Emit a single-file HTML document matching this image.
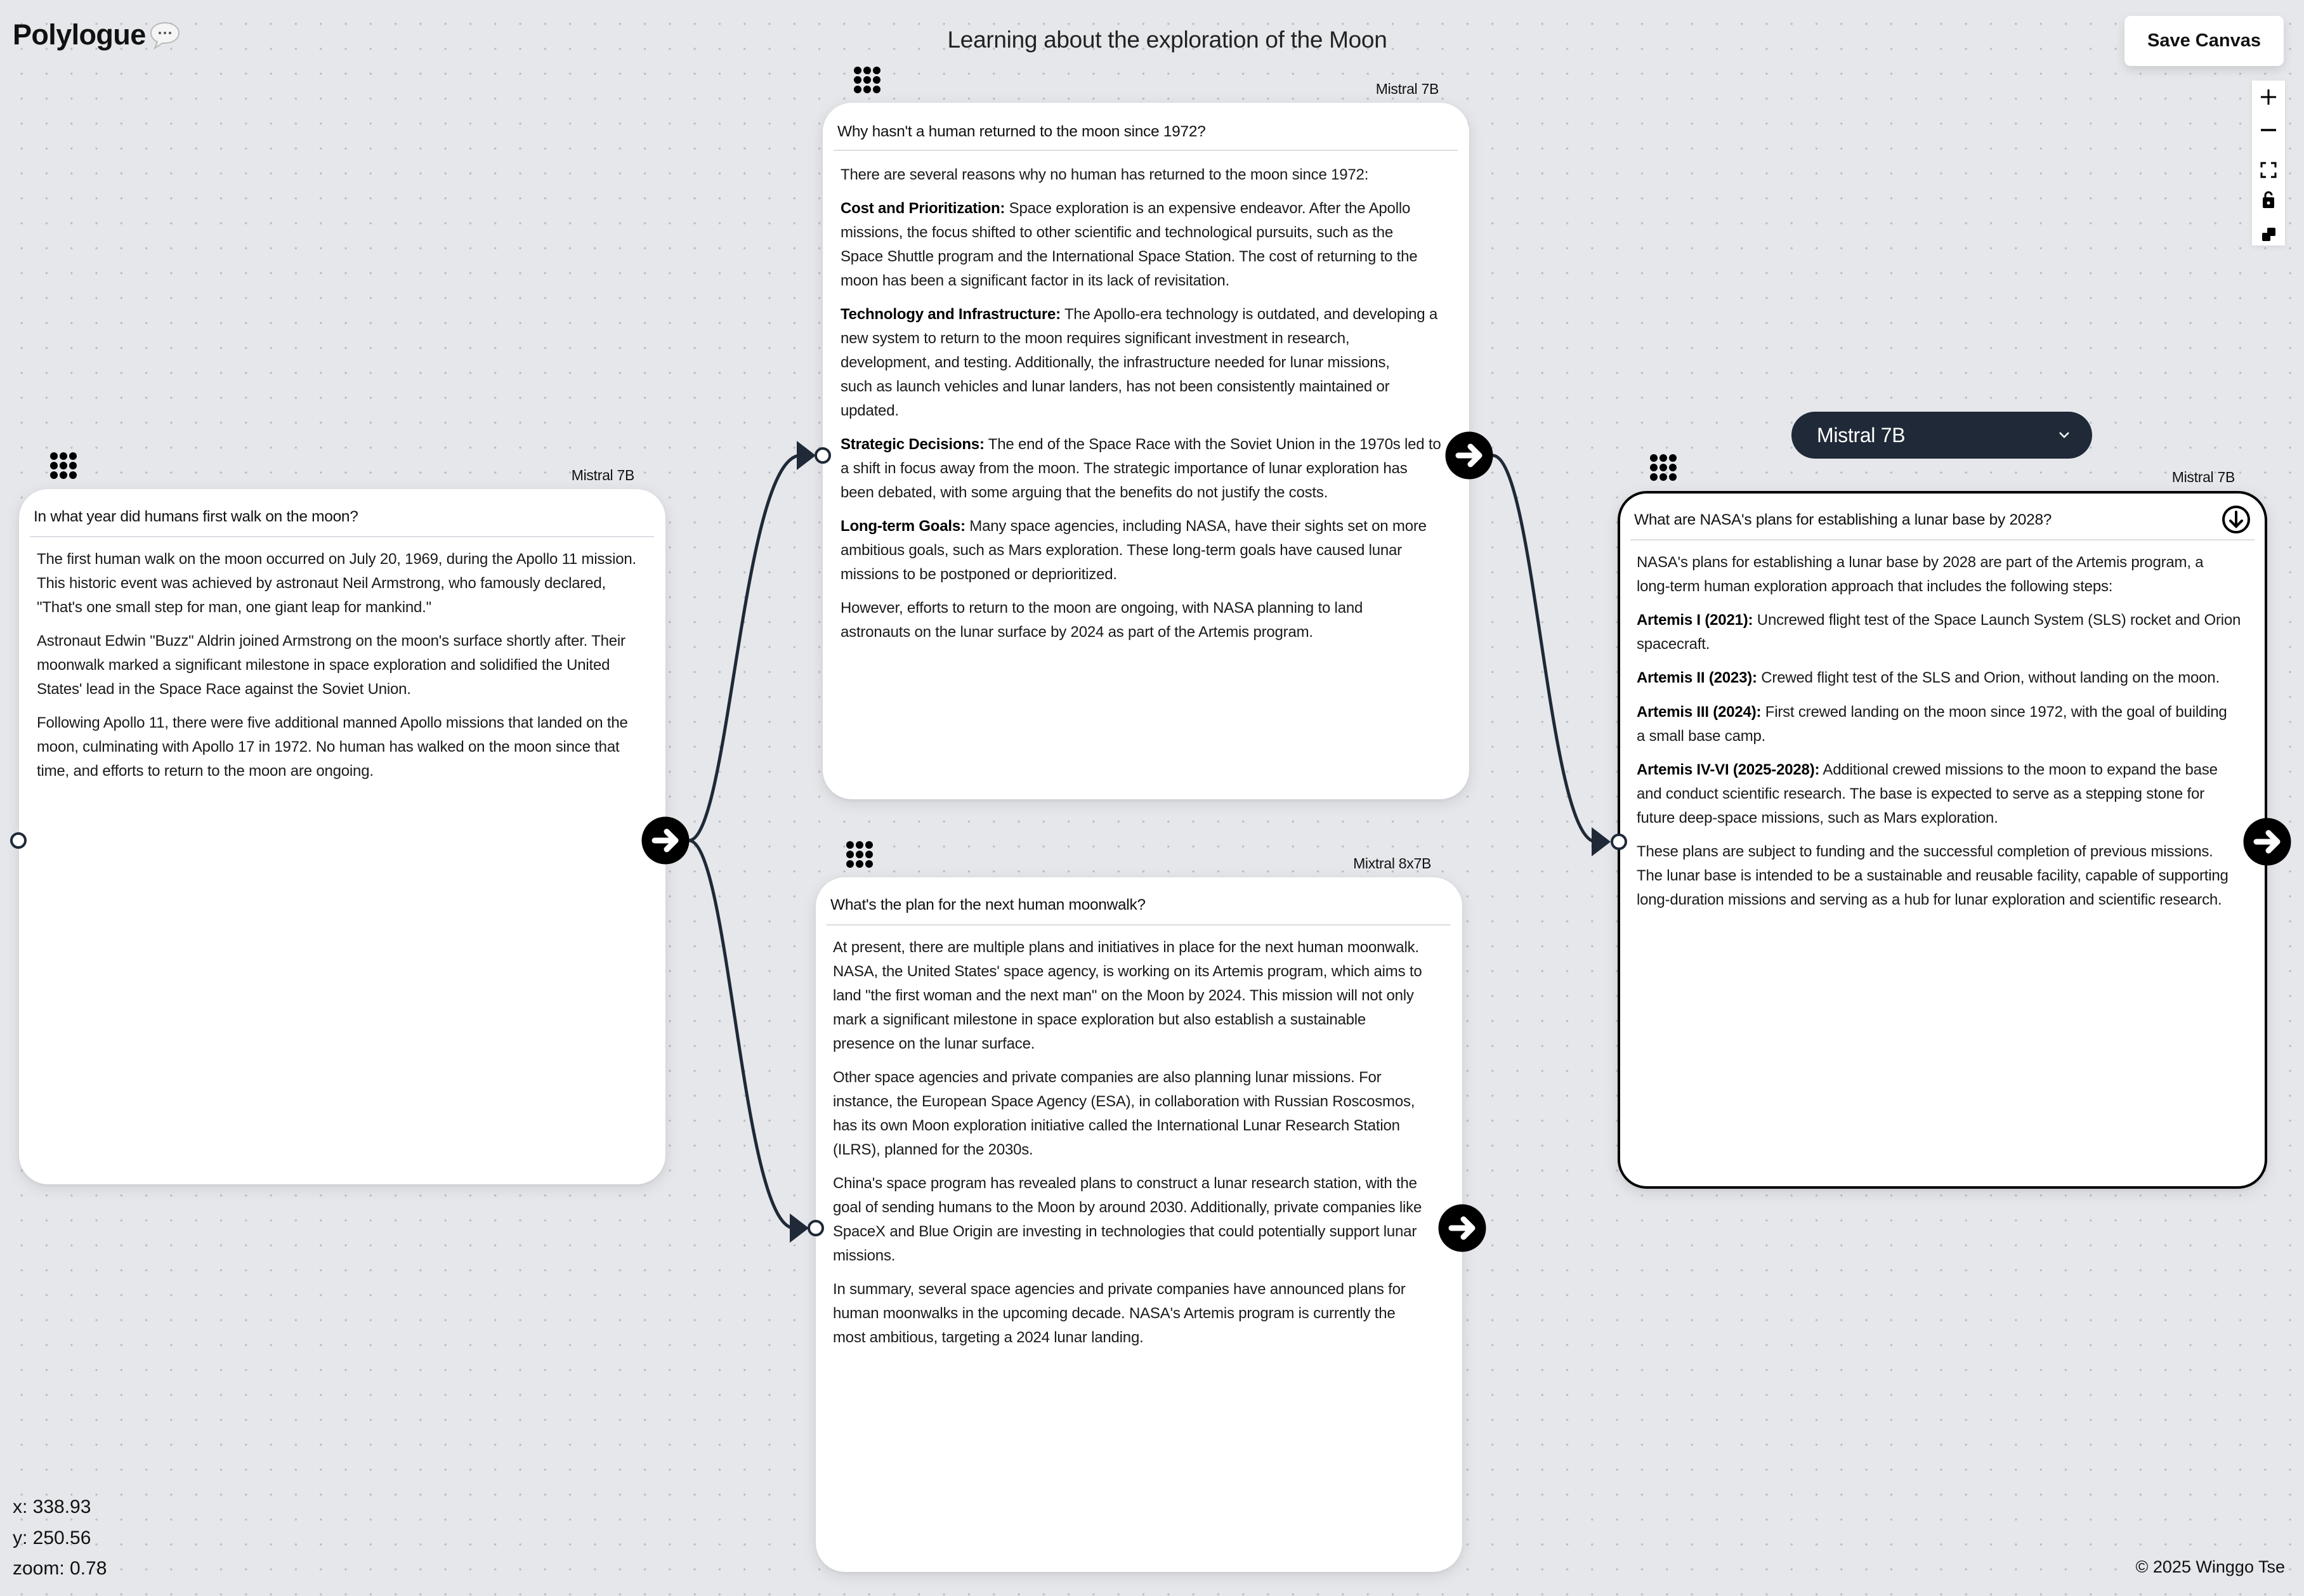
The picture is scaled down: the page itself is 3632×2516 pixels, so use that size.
<!DOCTYPE html>
<html><head><meta charset="utf-8">
<style>
*{box-sizing:border-box;margin:0;padding:0}
html,body{width:3632px;height:2516px;overflow:hidden}
body{background-color:#e5e7eb;background-image:radial-gradient(circle,#b9bcc2 1.4px,transparent 2px);background-size:39.3px 39.3px;background-position:14.5px 18px;font-family:"Liberation Sans",sans-serif;color:#111;position:relative}
.abs{position:absolute}
.card{position:absolute;background:#fff;border-radius:46px;box-shadow:0 6px 24px rgba(0,0,0,0.10),0 2px 6px rgba(0,0,0,0.05)}
.q{position:absolute;font-size:24.5px;white-space:nowrap;letter-spacing:-0.3px;line-height:30px}
.sep{position:absolute;height:2px;background:#dcdde2}
.body{position:absolute;font-size:24px;letter-spacing:-0.2px;line-height:37.9px;white-space:nowrap;color:#1a1a1a}
.body p{margin-bottom:15.4px}
.body b{font-weight:700;color:#000}
.lbl{position:absolute;font-size:23px;white-space:nowrap;letter-spacing:-0.3px;text-align:right}
.drag{position:absolute;width:42px;height:42px;display:grid;grid-template-columns:repeat(3,12px);gap:3px}
.drag i{width:12px;height:12px;border-radius:50%;background:#000;display:block}
</style></head><body>

<div class="abs" style="left:20px;top:29px;font-size:45px;font-weight:700;letter-spacing:-0.6px">Polylogue</div>
<svg class="abs" style="left:234px;top:32px" width="52" height="50" viewBox="0 0 52 50"><path d="M26 4C13 4 4 11 4 20c0 6 4 11 10 14l-4 10 12-8c1 0 3 0 4 0 13 0 22-7 22-16S39 4 26 4z" fill="#f5f5f5" stroke="#b9b9b9" stroke-width="2"/><circle cx="18" cy="20" r="2" fill="#555"/><circle cx="26" cy="20" r="2" fill="#555"/><circle cx="34" cy="20" r="2" fill="#555"/></svg>

<div class="abs" style="left:1340px;top:42px;width:1000px;text-align:center;font-size:37px;color:#222;letter-spacing:-0.3px">Learning about the exploration of the Moon</div>

<div class="abs" style="left:3349px;top:25px;width:251px;height:79px;background:#fff;border-radius:10px;box-shadow:0 6px 16px rgba(0,0,0,0.12);font-size:29px;font-weight:700;text-align:center;line-height:79px;color:#111">Save Canvas</div>

<div class="abs" style="left:3550px;top:127px;width:52px;height:260px;background:#fff;box-shadow:0 2px 8px rgba(0,0,0,0.08)">
<svg width="52" height="260" viewBox="0 0 52 260">
<path d="M26 14v24M14 26h24" stroke="#000" stroke-width="3"/>
<path d="M14 78h24" stroke="#000" stroke-width="3.5"/>
<path d="M15 137v-7h7M30 130h7v7M37 145v7h-7M22 152h-7v-7" stroke="#000" stroke-width="3" fill="none"/>
<rect x="17" y="184" width="18" height="17" rx="2" fill="#000"/><path d="M21 185v-4a5 5 0 0 1 10 0" stroke="#000" stroke-width="3" fill="none"/><circle cx="26" cy="193" r="2.5" fill="#fff"/>
<rect x="16" y="240" width="13" height="13" rx="2" fill="#000"/><rect x="24" y="232" width="13" height="13" rx="2" fill="#000"/>
</svg></div>

<svg class="abs" style="left:0;top:0" width="3632" height="2516">
<g stroke="#1f2937" stroke-width="5" fill="none">
<path d="M1086 1325C1150 1325 1170 718 1262 718"/>
<path d="M1086 1325C1150 1325 1170 1936 1252 1936"/>
<path d="M2353 718C2420 718 2440 1327 2516 1327"/>
</g>
<g fill="#1f2937">
<path d="M1256 695L1286 718L1256 741Z"/>
<path d="M1245 1913L1275 1936L1245 1959Z"/>
<path d="M2509 1304L2539 1327L2509 1350Z"/>
</g>
</svg>

<!-- Node 1 -->
<div class="drag" style="left:79px;top:713px"><i></i><i></i><i></i><i></i><i></i><i></i><i></i><i></i><i></i></div>
<div class="lbl" style="right:2632px;top:736px">Mistral 7B</div>
<div class="card" style="left:30px;top:771px;width:1019px;height:1096px"></div>
<div class="q" style="left:53px;top:800px">In what year did humans first walk on the moon?</div>
<div class="sep" style="left:47px;top:845px;width:984px"></div>
<div class="body" style="left:58px;top:863px">
<p>The first human walk on the moon occurred on July 20, 1969, during the Apollo 11 mission.<br>This historic event was achieved by astronaut Neil Armstrong, who famously declared,<br>"That's one small step for man, one giant leap for mankind."</p>
<p>Astronaut Edwin "Buzz" Aldrin joined Armstrong on the moon's surface shortly after. Their<br>moonwalk marked a significant milestone in space exploration and solidified the United<br>States' lead in the Space Race against the Soviet Union.</p>
<p>Following Apollo 11, there were five additional manned Apollo missions that landed on the<br>moon, culminating with Apollo 17 in 1972. No human has walked on the moon since that<br>time, and efforts to return to the moon are ongoing.</p>
</div>

<!-- Node 2 -->
<div class="drag" style="left:1346px;top:105px"><i></i><i></i><i></i><i></i><i></i><i></i><i></i><i></i><i></i></div>
<div class="lbl" style="right:1364px;top:127px">Mistral 7B</div>
<div class="card" style="left:1297px;top:162px;width:1019px;height:1098px"></div>
<div class="q" style="left:1320px;top:193px">Why hasn't a human returned to the moon since 1972?</div>
<div class="sep" style="left:1314px;top:236px;width:984px"></div>
<div class="body" style="left:1325px;top:257px">
<p>There are several reasons why no human has returned to the moon since 1972:</p>
<p><b>Cost and Prioritization:</b> Space exploration is an expensive endeavor. After the Apollo<br>missions, the focus shifted to other scientific and technological pursuits, such as the<br>Space Shuttle program and the International Space Station. The cost of returning to the<br>moon has been a significant factor in its lack of revisitation.</p>
<p><b>Technology and Infrastructure:</b> The Apollo-era technology is outdated, and developing a<br>new system to return to the moon requires significant investment in research,<br>development, and testing. Additionally, the infrastructure needed for lunar missions,<br>such as launch vehicles and lunar landers, has not been consistently maintained or<br>updated.</p>
<p><b>Strategic Decisions:</b> The end of the Space Race with the Soviet Union in the 1970s led to<br>a shift in focus away from the moon. The strategic importance of lunar exploration has<br>been debated, with some arguing that the benefits do not justify the costs.</p>
<p><b>Long-term Goals:</b> Many space agencies, including NASA, have their sights set on more<br>ambitious goals, such as Mars exploration. These long-term goals have caused lunar<br>missions to be postponed or deprioritized.</p>
<p>However, efforts to return to the moon are ongoing, with NASA planning to land<br>astronauts on the lunar surface by 2024 as part of the Artemis program.</p>
</div>

<!-- Node 3 -->
<div class="drag" style="left:1334px;top:1326px"><i></i><i></i><i></i><i></i><i></i><i></i><i></i><i></i><i></i></div>
<div class="lbl" style="right:1376px;top:1348px">Mixtral 8x7B</div>
<div class="card" style="left:1286px;top:1383px;width:1019px;height:1095px"></div>
<div class="q" style="left:1309px;top:1412px">What's the plan for the next human moonwalk?</div>
<div class="sep" style="left:1303px;top:1457px;width:984px"></div>
<div class="body" style="left:1313px;top:1475px">
<p>At present, there are multiple plans and initiatives in place for the next human moonwalk.<br>NASA, the United States' space agency, is working on its Artemis program, which aims to<br>land "the first woman and the next man" on the Moon by 2024. This mission will not only<br>mark a significant milestone in space exploration but also establish a sustainable<br>presence on the lunar surface.</p>
<p>Other space agencies and private companies are also planning lunar missions. For<br>instance, the European Space Agency (ESA), in collaboration with Russian Roscosmos,<br>has its own Moon exploration initiative called the International Lunar Research Station<br>(ILRS), planned for the 2030s.</p>
<p>China's space program has revealed plans to construct a lunar research station, with the<br>goal of sending humans to the Moon by around 2030. Additionally, private companies like<br>SpaceX and Blue Origin are investing in technologies that could potentially support lunar<br>missions.</p>
<p>In summary, several space agencies and private companies have announced plans for<br>human moonwalks in the upcoming decade. NASA's Artemis program is currently the<br>most ambitious, targeting a 2024 lunar landing.</p>
</div>

<!-- Node 4 -->
<div class="abs" style="left:2824px;top:649px;width:474px;height:74px;background:#1f2937;border-radius:37px;color:#fff;font-size:32px;line-height:74px;padding-left:40px;letter-spacing:-0.3px">Mistral 7B
<svg class="abs" style="right:34px;top:30px" width="20" height="14" viewBox="0 0 20 14"><path d="M3 3l7 7 7-7" stroke="#fff" stroke-width="2.5" fill="none"/></svg></div>
<div class="drag" style="left:2601px;top:716px"><i></i><i></i><i></i><i></i><i></i><i></i><i></i><i></i><i></i></div>
<div class="lbl" style="right:109px;top:739px">Mistral 7B</div>
<div class="card" style="left:2550px;top:774px;width:1024px;height:1100px;border:4px solid #000"></div>
<div class="q" style="left:2576px;top:805px">What are NASA's plans for establishing a lunar base by 2028?</div>
<svg class="abs" style="left:3500px;top:794px" width="50" height="50" viewBox="0 0 50 50"><circle cx="25" cy="25" r="20" stroke="#000" stroke-width="4" fill="none"/><path d="M25 13v22M16 27l9 9 9-9" stroke="#000" stroke-width="4" fill="none" stroke-linecap="round"/></svg>
<div class="sep" style="left:2570px;top:850px;width:984px"></div>
<div class="body" style="left:2580px;top:868px">
<p>NASA's plans for establishing a lunar base by 2028 are part of the Artemis program, a<br>long-term human exploration approach that includes the following steps:</p>
<p><b>Artemis I (2021):</b> Uncrewed flight test of the Space Launch System (SLS) rocket and Orion<br>spacecraft.</p>
<p><b>Artemis II (2023):</b> Crewed flight test of the SLS and Orion, without landing on the moon.</p>
<p><b>Artemis III (2024):</b> First crewed landing on the moon since 1972, with the goal of building<br>a small base camp.</p>
<p><b>Artemis IV-VI (2025-2028):</b> Additional crewed missions to the moon to expand the base<br>and conduct scientific research. The base is expected to serve as a stepping stone for<br>future deep-space missions, such as Mars exploration.</p>
<p>These plans are subject to funding and the successful completion of previous missions.<br>The lunar base is intended to be a sustainable and reusable facility, capable of supporting<br>long-duration missions and serving as a hub for lunar exploration and scientific research.</p>
</div>

<svg class="abs" style="left:0;top:0;pointer-events:none" width="3632" height="2516">
<g fill="#fff" stroke="#1f2937" stroke-width="4">
<circle cx="29" cy="1325" r="11"/>
<circle cx="1297" cy="718" r="11"/>
<circle cx="1286" cy="1936" r="11"/>
<circle cx="2552" cy="1327" r="11"/>
</g>
<g>
<circle cx="1049" cy="1325" r="37.5" fill="#000"/>
<circle cx="2316" cy="718" r="37.5" fill="#000"/>
<circle cx="2305" cy="1936" r="37.5" fill="#000"/>
<circle cx="3574" cy="1327" r="37.5" fill="#000"/>
</g>
<g stroke="#fff" stroke-width="9" stroke-linecap="round" stroke-linejoin="round" fill="none">
<path d="M1032 1325h32M1051 1311l14 14-14 14"/>
<path d="M2299 718h32M2318 704l14 14-14 14"/>
<path d="M2288 1936h32M2307 1922l14 14-14 14"/>
<path d="M3557 1327h32M3576 1313l14 14-14 14"/>
</g>
</svg>

<div class="abs" style="left:20px;top:2352px;font-size:30px;line-height:48.5px;color:#111">x: 338.93<br>y: 250.56<br>zoom: 0.78</div>
<div class="abs" style="right:30px;top:2455px;font-size:27px;color:#111">© 2025 Winggo Tse</div>

</body></html>
